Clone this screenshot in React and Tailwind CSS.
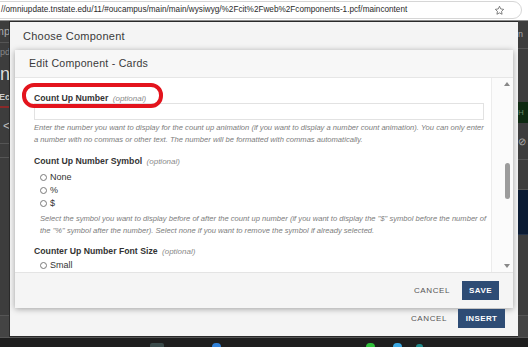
import React from "react";

function Radio({ label }) {
  return (
    <div className="h-[13px] flex items-center">
      <span className="w-[7px] h-[7px] rounded-full border border-[#7a7a7a] bg-white shrink-0" />
      <span className="ml-[3px] text-[9px] text-[#333] leading-[13px]">{label}</span>
    </div>
  );
}

function Label({ title, className = "" }) {
  return (
    <div className={"h-[12px] leading-[12px] whitespace-nowrap " + className}>
      <span className="text-[8.7px] font-bold text-[#333]">{title}</span>{" "}
      <span className="text-[8px] italic text-[#8a8a8a]">(optional)</span>
    </div>
  );
}

export default function App() {
  return (
    <div className="w-[528px] h-[347px] overflow-hidden flex flex-col bg-[#3b3b3b] font-['Liberation_Sans',Arial,sans-serif]">
      {/* address bar */}
      <div className="h-[21px] shrink-0 bg-white border-b border-[#8c8c8c] flex items-center overflow-hidden">
        <div className="ml-[-12px] w-[534px] h-[18px] rounded-full border border-[#d6d6d6] flex items-center pl-[12px] pr-[10px]">
          <span className="text-[8.2px] text-[#2a2a2a] whitespace-nowrap flex-1">
            //omniupdate.tnstate.edu/11/#oucampus/main/main/wysiwyg/%2Fcit%2Fweb%2Fcomponents-1.pcf/maincontent
          </span>
          <svg width="11" height="11" viewBox="0 0 24 24" fill="none" stroke="#555" strokeWidth="1.6" strokeLinejoin="round" className="mr-[6px]">
            <path d="M12 2.8l2.8 5.8 6.3.9-4.6 4.4 1.1 6.3L12 17.2l-5.6 3 1.1-6.3L2.9 9.5l6.3-.9z" />
          </svg>
        </div>
      </div>

      {/* main */}
      <div className="h-[316px] shrink-0 flex">
        {/* left strip */}
        <div className="w-[10px] shrink-0 overflow-hidden flex flex-col bg-[#3d3d3d]">
          <div className="h-[22px] border-b border-[#555] flex justify-end items-center">
            <span className="text-[11px] text-[#aaa] whitespace-nowrap">Comp</span>
          </div>
          <div className="h-[16px] flex justify-end items-end">
            <span className="text-[9px] text-[#888] whitespace-nowrap">Upd</span>
          </div>
          <div className="h-[30px] flex justify-end items-center">
            <span className="text-[18px] text-[#ddd] whitespace-nowrap">Con</span>
          </div>
          <div className="h-[19px] border-b-2 border-[#8a2a2a] flex justify-end items-center">
            <span className="text-[9px] font-bold text-[#ccc] whitespace-nowrap">Ec</span>
          </div>
          <div className="h-[36px] border-b border-[#555] flex justify-end items-center">
            <span className="text-[12px] text-[#bbb]">&lt;</span>
          </div>
          <div className="h-[14px] border-b border-[#555]" />
          <div className="flex-1" />
          <div className="h-[22px] border-t border-[#555] bg-[#444]" />
        </div>

        {/* outer modal */}
        <div className="w-[508px] shrink-0 mt-[1px] mb-[1px] flex flex-col bg-[#f4f4f4] shadow-[0_0_0_1px_#2a2a2a]">
          <div className="h-[28px] shrink-0 flex items-center pl-[13px] text-[11px] tracking-[0.25px] text-[#3a3a3a]">
            Choose Component
          </div>

          {/* inner modal */}
          <div className="mx-[5px] h-[258px] shrink-0 flex flex-col bg-white shadow-[0_1px_6px_rgba(0,0,0,0.35)]">
            <div className="h-[28px] shrink-0 flex items-center pl-[14px] bg-[#f7f7f7] border-b border-[#e6e6e6] text-[10.6px] tracking-[0.25px] text-[#3a3a3a]">
              Edit Component - Cards
            </div>

            <div className="h-[194px] shrink-0 flex">
              <div className="flex-1 overflow-hidden pl-[19px] pr-[7px]">
                <div className="-mt-[10px] h-[12px] leading-[12px] text-[7.6px] italic text-[#888] whitespace-nowrap pl-[6px]">
                  Please type the display text that you want for the card. Leave it empty if you don't want any text to display on the page.
                </div>

                <div className="relative mt-[10px]">
                  <Label title="Count Up Number" />
                  <div className="absolute left-[-12px] top-[-7px] w-[141px] h-[25px] rounded-[12px] border-[4px] border-[#e3141d] z-10" />
                </div>

                <div className="mt-[1px] h-[17px] border border-[#e2e2e2] bg-white" />

                <div className="mt-[2px] text-[7.6px] italic leading-[12px] text-[#7c7c7c]">
                  <div className="whitespace-nowrap">
                    Enter the number you want to display for the count up animation (if you want to display a number count animation). You can only enter
                  </div>
                  <div className="whitespace-nowrap">
                    a number with no commas or other text. The number will be formatted with commas automatically.
                  </div>
                </div>

                <Label title="Count Up Number Symbol" className="mt-[7px]" />

                <div className="pl-[6px]">
                  <div className="mt-[6px] flex flex-col">
                    <Radio label="None" />
                    <Radio label="%" />
                    <Radio label="$" />
                  </div>
                  <div className="mt-[3px] text-[7.6px] italic leading-[12px] text-[#7c7c7c]">
                    <div className="whitespace-nowrap">
                      Select the symbol you want to display before of after the count up number (if you want to display the "$" symbol before the number of
                    </div>
                    <div className="whitespace-nowrap">
                      the "%" symbol after the number). Select none if you want to remove the symbol if already selected.
                    </div>
                  </div>
                </div>

                <Label title="Counter Up Number Font Size" className="mt-[6px]" />

                <div className="pl-[6px] mt-[4px]">
                  <Radio label="Small" />
                  <Radio label="Medium" />
                </div>
              </div>

              {/* scrollbar */}
              <div className="w-[22px] shrink-0 border-l border-[#ececec] bg-[#fbfbfb] flex flex-col items-end pr-[2px]">
                <svg width="6" height="4" viewBox="0 0 6 4" className="mt-[4px] mr-[1px]">
                  <path d="M0 4L3 0L6 4Z" fill="#888" />
                </svg>
                <div className="mt-[77px] w-[5px] h-[36px] rounded-full bg-[#9c9c9c] mr-[1px]" />
                <div className="flex-1" />
                <svg width="6" height="4" viewBox="0 0 6 4" className="mb-[4px] mr-[1px]">
                  <path d="M0 0L6 0L3 4Z" fill="#888" />
                </svg>
              </div>
            </div>

            <div className="flex-1 flex items-center justify-end pr-[14px] bg-[#f5f5f5] border-t border-[#e4e4e4]">
              <span className="text-[8px] tracking-[0.6px] text-[#555]">CANCEL</span>
              <div className="ml-[12px] w-[37px] h-[19px] bg-[#2e4c75] flex items-center justify-center text-[8px] font-bold tracking-[0.4px] text-white">
                SAVE
              </div>
            </div>
          </div>

          {/* outer footer */}
          <div className="flex-1 flex items-start justify-end pr-[13px] pt-[1px]">
            <div className="h-[19px] flex items-center">
              <span className="text-[8px] tracking-[0.6px] text-[#555]">CANCEL</span>
            </div>
            <div className="ml-[11px] w-[47px] h-[19px] bg-[#2e4c75] flex items-center justify-center text-[8px] font-bold tracking-[0.4px] text-white">
              INSERT
            </div>
          </div>
        </div>

        {/* right strip */}
        <div className="w-[10px] shrink-0 overflow-hidden flex flex-col bg-[#3d3d3d]">
          <div className="h-[28px] border-b border-[#555] flex items-center">
            <span className="text-[9px] text-[#aaa] whitespace-nowrap">n</span>
          </div>
          <div className="h-[53px]" />
          <div className="h-[21px] bg-[#0f2a12] flex items-center">
            <span className="text-[8px] text-[#6a8a6a]">H</span>
          </div>
          <div className="h-[37px] border-b border-[#555] flex items-center">
            <span className="text-[10px] text-[#aaa]">⊘</span>
          </div>
          <div className="h-[30px] border-b border-[#555]" />
          <div className="h-[45px] bg-[#0b1b33] border-b border-[#22324a]" />
          <div className="flex-1" />
          <div className="h-[22px] border-t border-[#555] bg-[#444]" />
        </div>
      </div>

      {/* taskbar */}
      <div className="flex-1 bg-[#1e1e1e] border-t border-[#555] flex items-end overflow-hidden">
        <div className="ml-[150px] w-[14px] h-[4px] rounded-t-[2px] bg-[#3a4a4a]" />
        <div className="ml-[48px] w-[9px] h-[4px] rounded-t-full bg-[#2f7fd6]" />
        <div className="ml-[145px] w-[9px] h-[4px] rounded-t-full bg-[#2fbf3a]" />
        <div className="ml-[18px] w-[9px] h-[4px] rounded-t-full bg-[#3aa6e0]" />
        <div className="ml-[14px] w-[7px] h-[3px] rounded-t-full bg-[#1e8a8a]" />
      </div>
    </div>
  );
}
